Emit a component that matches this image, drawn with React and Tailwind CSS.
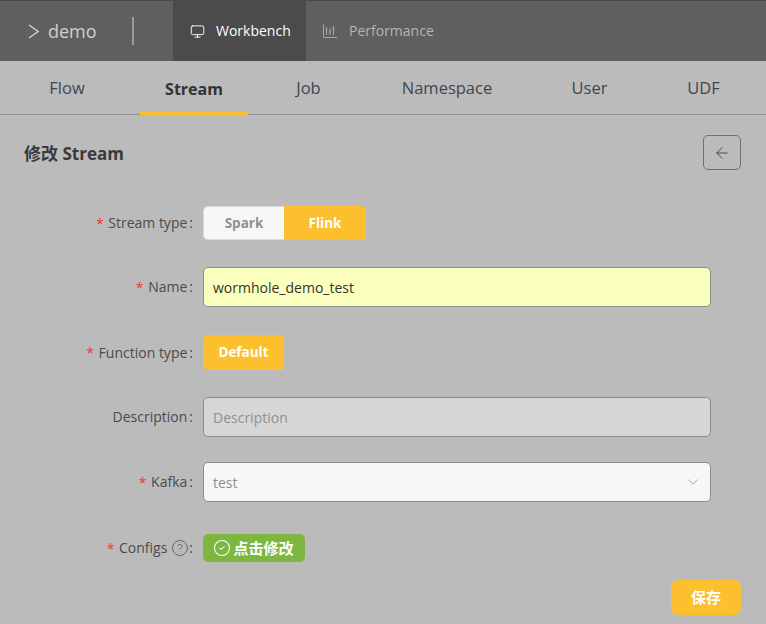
import { ArrowLeft, ChevronDown, CircleCheck, CircleHelp, Monitor } from "lucide-react";

const font = "font-['Open_Sans','Noto_Sans_CJK_SC',sans-serif]";

function ChartIcon() {
  return (
    <svg width="14" height="14" viewBox="0 0 14 14" fill="none" stroke="#a8a8a8" strokeWidth="1">
      <path d="M.5 .5V13.5H14" />
      <path d="M3.5 3V11M2.5 6H4.5M7 4V11M6 8H8M10.5 2V11M9.5 5H11.5" />
    </svg>
  );
}

function Row({ label, required, h, mt, children, extra }) {
  return (
    <div className={`flex items-center ${h} ${mt}`}>
      <div className="w-[193px] flex justify-end items-center text-sm text-[#4b4b4b] whitespace-nowrap">
        {required && <span className="text-[#f04134] mr-[3px] text-lg leading-none pt-[5px] font-['Liberation_Mono',monospace]">*</span>}
        <span>{label}</span>
        {extra}
        <span className="ml-[2px]">:</span>
      </div>
      <div className="ml-[10px] flex-1 min-w-0">{children}</div>
    </div>
  );
}

export default function App() {
  return (
    <div className={`w-[766px] h-[624px] overflow-hidden bg-[#bbbbbb] ${font}`}>
      <header className="h-[61px] flex bg-[#5f5f5f] border-t border-[#4a4a4a]">
        <div className="w-[173px] flex items-center">
          <svg className="ml-[28px]" width="11" height="15" viewBox="0 0 11 15" fill="none" stroke="#d0d0d0" strokeWidth="1.4">
            <path d="M1 1L10 7.5L1 14" />
          </svg>
          <span className="ml-[9px] text-lg text-[#cfcfcf]">demo</span>
          <span className="ml-[35px] w-[2px] h-[28px] bg-[#9a9a9a]" />
        </div>
        <div className="w-[133px] bg-[#4b4b4b] flex items-center pl-[17px] text-sm text-white">
          <Monitor size={15} strokeWidth={1.5} />
          <span className="ml-[11px]">Workbench</span>
        </div>
        <div className="flex items-center pl-[17px] text-sm text-[#b4b4b4]">
          <ChartIcon />
          <span className="ml-[12px]">Performance</span>
        </div>
      </header>

      <nav className="h-[54px] flex pl-[24px] gap-[30px] border-b border-[#8f8f8f] text-[16.5px] text-[#3f4650]">
        <a className="w-[86px] pt-[2px] flex items-center justify-center">Flow</a>
        <a className="w-[108px] -mr-[8px] flex items-center justify-center text-base font-bold text-[#333333] border-b-[3px] border-[#fcbf2d] -mb-px pt-[5px]">Stream</a>
        <a className="w-[77px] pt-[2px] flex items-center justify-center">Job</a>
        <a className="w-[140px] pt-[2px] flex items-center justify-center">Namespace</a>
        <a className="w-[85px] pt-[2px] flex items-center justify-center">User</a>
        <a className="w-[83px] pt-[2px] flex items-center justify-center">UDF</a>
      </nav>

      <main>
        <div className="flex items-center justify-between pl-[24px] pr-[25px] pt-[20px]">
          <h2 className="text-[17px] pt-[2px] font-bold text-[#3a3a3a]">修改 Stream</h2>
          <button className="w-[38px] h-[35px] rounded-[5px] border border-[#707070] flex items-center justify-center text-[#444444]">
            <ArrowLeft size={18} strokeWidth={1.25} />
          </button>
        </div>

        <div className="pr-[55px]">
          <Row label="Stream type" required h="h-[34px]" mt="mt-[36px]">
            <div className="flex w-fit h-[34px] text-[13.5px] font-bold">
              <span className="w-[81px] flex items-center justify-center bg-[#f7f7f7] border border-r-0 border-[#d9d9d9] text-[#8f8f8f] rounded-l-[5px]">Spark</span>
              <span className="w-[82px] flex items-center justify-center bg-[#fcbf2d] text-white rounded-r-[5px]">Flink</span>
            </div>
          </Row>

          <Row label="Name" required h="h-[40px]" mt="mt-[27px]">
            <div className="h-[40px] pt-[1px] flex items-center px-[9px] bg-[#faffbd] border border-[#8c8c8c] rounded-[5px] text-sm text-[#333333]">wormhole_demo_test</div>
          </Row>

          <Row label="Function type" required h="h-[35px]" mt="mt-[28px]">
            <span className="w-[81px] h-[35px] flex items-center justify-center bg-[#fcbf2d] text-white text-[13.5px] font-bold rounded-l-[5px]">Default</span>
          </Row>

          <Row label="Description" h="h-[40px]" mt="mt-[27px]">
            <div className="h-[40px] pt-[1px] flex items-center px-[9px] bg-[#d6d6d6] border border-[#8c8c8c] rounded-[5px] text-sm text-[#909090]">Description</div>
          </Row>

          <Row label="Kafka" required h="h-[40px]" mt="mt-[25px]">
            <div className="h-[40px] flex items-center justify-between pl-[9px] pr-[8px] bg-[#f7f7f7] border border-[#8c8c8c] rounded-[5px] text-sm text-[#8f8f8f]">
              <span className="pt-[1px]">test</span>
              <ChevronDown size={18} strokeWidth={1.25} className="text-[#a0a0a0]" />
            </div>
          </Row>

          <Row
            label="Configs"
            required
            h="h-[28px]"
            mt="mt-[32px]"
            extra={<CircleHelp size={18} strokeWidth={1.1} className="ml-[4px] -mr-[2px] text-[#555555]" />}
          >
            <button className="w-[102px] h-[28px] flex items-center justify-center gap-[2px] bg-[#7eb73f] text-white text-[15px] font-bold rounded-[5px]">
              <CircleCheck size={18} strokeWidth={1.4} className="-ml-[1px]" />
              点击修改
            </button>
          </Row>
        </div>

        <div className="flex justify-end pr-[25px] mt-[18px]">
          <button className="w-[70px] h-[35px] bg-[#fcbf2d] text-white text-[15px] font-bold rounded-[7px]">保存</button>
        </div>
      </main>
    </div>
  );
}
